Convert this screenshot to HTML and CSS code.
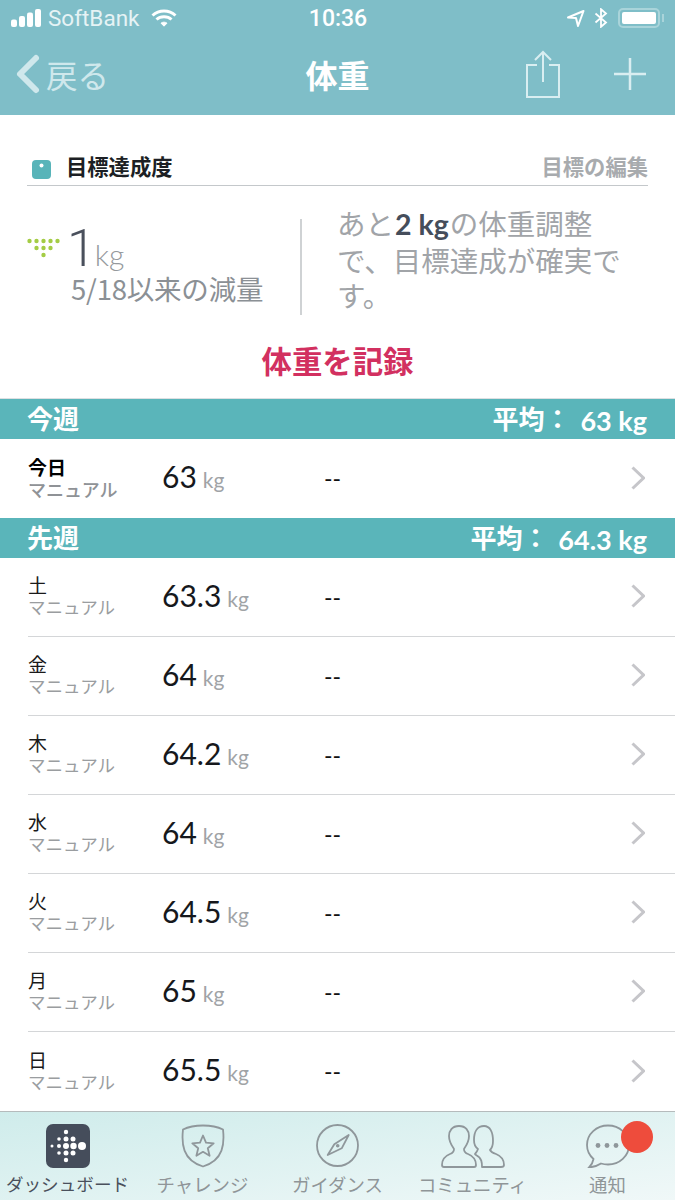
FILE: index.html
```html
<!DOCTYPE html>
<html lang="ja">
<head>
<meta charset="utf-8">
<title>体重</title>
<link rel="stylesheet" href="styles.css">
</head>
<body>
<div class="app">
  <header class="top">
    <div class="status">
      <div class="st-left">
        <svg class="signal" width="30" height="18" viewBox="0 0 30 18"><rect x="0" y="10.500" width="6" height="7.500" rx="2"/><rect x="8" y="7" width="6" height="11" rx="2"/><rect x="16" y="3.500" width="6" height="14.500" rx="2"/><rect x="24" y="0" width="6" height="18" rx="2"/></svg>
        <span class="carrier">SoftBank</span>
        <svg width="26" height="18" viewBox="0 0 26 18" fill="none" stroke="#fff"><path d="M1.500 6.500C8 .5 18 .5 24.500 6.500" stroke-width="3"/><path d="M5.500 10.500C9.500 6.800 16.500 6.800 20.500 10.500" stroke-width="3"/><path d="M10 14.200C11.800 12.800 14.200 12.800 16 14.200L13 17.200Z" fill="#fff" stroke-width="1"/></svg>
      </div>
      <div class="clock">10:36</div>
      <div class="st-right">
        <svg width="20" height="20" viewBox="0 0 20 20" fill="none" stroke="#fff" stroke-width="2"><path d="M2 9.500 17.500 3 12 18 10 10Z" stroke-linejoin="round"/></svg>
        <svg width="14" height="20" viewBox="0 0 14 20" fill="none" stroke="#fff" stroke-width="1.800"><path d="M1.500 5.500 12 14.500 7 18.800V1.200L12 5.500 1.500 14.500"/></svg>
        <div class="batt"><div class="batt-fill"></div></div>
        <div class="batt-tip"></div>
      </div>
    </div>
    <div class="nav">
      <div class="back">
        <svg width="26" height="42" viewBox="0 0 26 42" fill="none" stroke="#cfe8ec" stroke-width="6" stroke-linecap="round" stroke-linejoin="round"><path d="M21 5 5 21l16 16"/></svg>
        <span>戻る</span>
      </div>
      <h1 class="title">体重</h1>
      <div class="nav-actions">
        <svg width="34" height="48" viewBox="0 0 34 48" fill="none" stroke="#d9eef1" stroke-width="2"><path d="M11 15H1V47H33V15H23"/><path d="M17 32V2M9 10l8-8 8 8"/></svg>
        <svg width="32" height="32" viewBox="0 0 32 32" fill="none" stroke="#d9eef1" stroke-width="2.500"><path d="M16 0V32M0 16H32"/></svg>
      </div>
    </div>
  </header>

  <section class="goal">
    <div class="goal-head">
      <div class="goal-name">
        <svg class="scale" width="19" height="19" viewBox="0 0 19 19"><rect width="19" height="19" rx="4" fill="#58b4b9"/><circle cx="9.500" cy="5.500" r="2" fill="#fff"/></svg>
        <span>目標達成度</span>
      </div>
      <span class="goal-edit">目標の編集</span>
    </div>
    <div class="goal-body">
      <div class="loss">
        <svg class="loss-icon" width="35" height="22" viewBox="0 0 35 22" fill="#a4cc45"><circle cx="2.500" cy="3" r="2.200"/><circle cx="9.500" cy="3" r="2.200"/><circle cx="16.500" cy="3" r="2.200"/><circle cx="23.500" cy="3" r="2.200"/><circle cx="30.500" cy="3" r="2.200"/><circle cx="9.500" cy="10" r="2.200"/><circle cx="16.500" cy="10" r="2.200"/><circle cx="23.500" cy="10" r="2.200"/><circle cx="16.500" cy="17" r="2.200"/></svg>
        <div class="loss-text">
          <div class="loss-val"><span class="big">1</span><span class="unit">kg</span></div>
          <div class="loss-sub">5/18以来の減量</div>
        </div>
      </div>
      <div class="advice">あと<b>2 kg</b>の体重調整で、目標達成が確実です。</div>
    </div>
    <div class="record">体重を記録</div>
  </section>

  <div class="week"><span class="wk">今週</span><span class="avg">平均： <em>63 kg</em></span></div>
  <div class="row today">
    <div class="day"><b>今日</b><small>マニュアル</small></div>
    <div class="val">63<span>kg</span></div>
    <div class="dash">--</div>
    <svg class="chev" width="14" height="24" viewBox="0 0 14 24" fill="none" stroke="#c6c6ca" stroke-width="3"><path d="M1.500 1.500 12.500 12 1.500 22.500"/></svg>
  </div>

  <div class="week"><span class="wk">先週</span><span class="avg">平均： <em>64.3 kg</em></span></div>
  <div class="row">
    <div class="day"><b>土</b><small>マニュアル</small></div>
    <div class="val">63.3<span>kg</span></div>
    <div class="dash">--</div>
    <svg class="chev" width="14" height="24" viewBox="0 0 14 24" fill="none" stroke="#c6c6ca" stroke-width="3"><path d="M1.500 1.500 12.500 12 1.500 22.500"/></svg>
  </div>
  <div class="row">
    <div class="day"><b>金</b><small>マニュアル</small></div>
    <div class="val">64<span>kg</span></div>
    <div class="dash">--</div>
    <svg class="chev" width="14" height="24" viewBox="0 0 14 24" fill="none" stroke="#c6c6ca" stroke-width="3"><path d="M1.500 1.500 12.500 12 1.500 22.500"/></svg>
  </div>
  <div class="row">
    <div class="day"><b>木</b><small>マニュアル</small></div>
    <div class="val">64.2<span>kg</span></div>
    <div class="dash">--</div>
    <svg class="chev" width="14" height="24" viewBox="0 0 14 24" fill="none" stroke="#c6c6ca" stroke-width="3"><path d="M1.500 1.500 12.500 12 1.500 22.500"/></svg>
  </div>
  <div class="row">
    <div class="day"><b>水</b><small>マニュアル</small></div>
    <div class="val">64<span>kg</span></div>
    <div class="dash">--</div>
    <svg class="chev" width="14" height="24" viewBox="0 0 14 24" fill="none" stroke="#c6c6ca" stroke-width="3"><path d="M1.500 1.500 12.500 12 1.500 22.500"/></svg>
  </div>
  <div class="row">
    <div class="day"><b>火</b><small>マニュアル</small></div>
    <div class="val">64.5<span>kg</span></div>
    <div class="dash">--</div>
    <svg class="chev" width="14" height="24" viewBox="0 0 14 24" fill="none" stroke="#c6c6ca" stroke-width="3"><path d="M1.500 1.500 12.500 12 1.500 22.500"/></svg>
  </div>
  <div class="row">
    <div class="day"><b>月</b><small>マニュアル</small></div>
    <div class="val">65<span>kg</span></div>
    <div class="dash">--</div>
    <svg class="chev" width="14" height="24" viewBox="0 0 14 24" fill="none" stroke="#c6c6ca" stroke-width="3"><path d="M1.500 1.500 12.500 12 1.500 22.500"/></svg>
  </div>
  <div class="row last">
    <div class="day"><b>日</b><small>マニュアル</small></div>
    <div class="val">65.5<span>kg</span></div>
    <div class="dash">--</div>
    <svg class="chev" width="14" height="24" viewBox="0 0 14 24" fill="none" stroke="#c6c6ca" stroke-width="3"><path d="M1.500 1.500 12.500 12 1.500 22.500"/></svg>
  </div>

  <nav class="tabs">
    <div class="tab active">
      <svg width="44" height="44" viewBox="0 0 44 44"><rect width="44" height="44" rx="7" fill="#454d5b"/><g fill="#fff"><circle cx="20" cy="8" r="2.200"/><circle cx="20" cy="15" r="2.500"/><circle cx="27" cy="15" r="2.500"/><circle cx="6" cy="22" r="1.500"/><circle cx="13" cy="22" r="2"/><circle cx="20" cy="22" r="3"/><circle cx="27.500" cy="22" r="3.200"/><circle cx="36" cy="22" r="4"/><circle cx="13" cy="15" r="1.800"/><circle cx="13" cy="29" r="1.800"/><circle cx="20" cy="29" r="2.500"/><circle cx="27" cy="29" r="2.500"/><circle cx="20" cy="36" r="2.200"/></g></svg>
      <span>ダッシュボード</span>
    </div>
    <div class="tab">
      <svg width="44" height="44" viewBox="0 0 44 44" fill="none" stroke="#8f979b" stroke-width="1.800"><path d="M22 1.500C30 1.500 37 3 42 5.500 43.500 19 43 36 22 42.500 1 36 .5 19 2 5.500 7 3 14 1.500 22 1.500Z"/><path d="M22 11.500l3 7.200 7.700.6-5.900 5 1.800 7.500L22 27.800l-6.600 4 1.800-7.500-5.900-5 7.700-.6Z" stroke-linejoin="round"/></svg>
      <span>チャレンジ</span>
    </div>
    <div class="tab">
      <svg width="44" height="44" viewBox="0 0 44 44" fill="none" stroke="#8f979b" stroke-width="1.800"><circle cx="21.500" cy="21.500" r="20.500"/><path d="M32.700 11 18.300 20.300 11.700 31 25.700 24.300Z" stroke-linejoin="round"/><circle cx="21.700" cy="21.700" r="1.800" fill="#8f979b" stroke="none"/></svg>
      <span>ガイダンス</span>
    </div>
    <div class="tab">
      <svg width="64" height="44" viewBox="0 0 64 44" fill="none" stroke="#8f979b" stroke-width="1.800"><path d="M18 2C11 2 8 7 8 12c0 6 3 10 5 13 0 3-1 4-4 5-5 2-8 5-8 11 0 1 1 2 2 2h30c1 0 2-1 2-2 0-6-3-9-8-11-3-1-4-2-4-5 2-3 5-7 5-13C28 7 25 2 18 2Z"/><path d="M37 25c-1 3-2 4-3 5l1 1c6 3 6 8 6 12h19c2 0 3-1 3-2 0-5-3-9-8-11-3-1-5-2-6-4 2-2 3-5 3-9 0-9-3-15-9-15s-10 5-10 14c0 4 1 7 4 9Z" stroke-linejoin="round"/></svg>
      <span>コミュニティ</span>
    </div>
    <div class="tab">
      <svg width="44" height="44" viewBox="0 0 44 44" fill="none" stroke="#8f979b" stroke-width="1.800"><path d="M22 1.500C10.500 1.500 1 10 1 21c0 6 2.500 10.500 6.500 14-.5 3-2 6-4.500 8.500 5-.5 9-2 12-4 2 .6 4.500 1 7 1 11.500 0 21-8.500 21-19.500S33.500 1.500 22 1.500Z"/><g fill="#8f979b" stroke="none"><circle cx="12" cy="21.500" r="2.400"/><circle cx="21" cy="21.500" r="2.400"/><circle cx="30" cy="21.500" r="2.400"/></g></svg>
      <span>通知</span>
      <i class="badge"></i>
    </div>
  </nav>
</div>
</body>
</html>
```

FILE: styles.css
```css
* { box-sizing: border-box; }
html, body { margin: 0; padding: 0; }
body { font-family: "Lato", "Noto Sans CJK JP", sans-serif; background: #fff; }
.app { width: 675px; height: 1200px; overflow: hidden; position: relative; display: flex; flex-direction: column; }

.top { height: 115px; background: #7fbec8; color: #fff; flex: none; }
.status { height: 36px; display: flex; align-items: center; justify-content: space-between; padding: 0 11px; position: relative; }
.st-left { display: flex; align-items: center; gap: 7px; }
.signal { fill: #fff; }
.carrier { font: 400 22.500px "Roboto", sans-serif; color: #e6f3f5; margin-right: 5px; }
.clock { position: absolute; left: 1px; right: 0; text-align: center; font: 500 23px "Roboto", sans-serif; }
.st-right { display: flex; align-items: center; gap: 8px; }
.batt { width: 42px; height: 20px; border: 2px solid #a9d4da; border-radius: 5px; padding: 2px; margin-left: 2px; }
.batt-fill { height: 100%; background: #fff; border-radius: 2px; }
.batt-tip { width: 2px; height: 8px; background: #a9d4da; margin-left: -6px; }

.nav { height: 79px; position: relative; display: flex; align-items: center; justify-content: space-between; padding: 0 29px 4px 15px; }
.back { display: flex; align-items: center; gap: 5px; color: #cfe8ec; font: 400 31.500px "Noto Sans CJK JP", sans-serif; }
.title { position: absolute; left: 0; right: 0; margin: 0; text-align: center; font: 700 32px "Noto Sans CJK JP", sans-serif; color: #fff; }
.nav-actions { display: flex; align-items: center; gap: 54px; }

.goal { height: 284px; flex: none; padding-top: 37px; display: flex; flex-direction: column; border-bottom: 1px solid #dde0e2; }
.goal-head { margin: 0 27px; height: 34px; display: flex; align-items: center; justify-content: space-between; border-bottom: 1px solid #c4c8cb; }
.goal-name { display: flex; align-items: center; gap: 15px; padding-left: 5px; font: 700 21.300px/30px "Noto Sans CJK JP", sans-serif; color: #1c1f24; }
.goal-name span { margin-top: -5px; }
.scale { margin-top: 1px; }
.goal-edit { font: 700 21.300px/30px "Noto Sans CJK JP", sans-serif; color: #a8abae; margin-top: -5px; }
.goal-body { display: flex; margin-top: 33px; height: 96px; }
.loss { width: 275px; margin-left: 27px; border-right: 2px solid #cfd2d4; display: flex; align-items: flex-start; }
.loss-icon { margin-top: 19px; flex: none; }
.loss-text { margin-left: 9px; }
.loss-val { display: flex; align-items: baseline; height: 49px; }
.big { font: 300 52px/60px "Roboto", sans-serif; color: #4a505c; margin-left: -4px; }
.unit { font: 300 30px/40px "Lato", sans-serif; color: #95999d; margin-left: -1px; }
.loss-sub { font: 400 27.500px/34px "Noto Sans CJK JP", sans-serif; color: #8b9095; white-space: nowrap; margin-top: 3px; letter-spacing: -.2px; }
.advice { width: 300px; margin-left: 35px; font: 400 28.500px/35px "Noto Sans CJK JP", sans-serif; color: #a1a4a8; margin-top: -14px; }
.advice b { font-family: "Lato", sans-serif; font-weight: 700; color: #454d5b; margin: 0 1px; }
.record { text-align: center; font: 700 30.400px/44px "Noto Sans CJK JP", sans-serif; color: #d23060; margin-top: 23px; }

.week { height: 40px; flex: none; background: #5ab5ba; color: #fff; display: flex; justify-content: space-between; align-items: center; padding: 0 28px 0 27px; }
.wk { font: 700 26px/34px "Noto Sans CJK JP", sans-serif; margin-top: -2px; }
.avg { font: 700 26px/34px "Noto Sans CJK JP", sans-serif; margin-top: -1px; }
.avg em { font: 700 27px/34px "Lato", sans-serif; margin-left: 4px; position: relative; top: 2px; }

.row { height: 79px; flex: none; position: relative; display: flex; align-items: center; margin-left: 28px; padding-right: 30px; border-bottom: 1px solid #d4d6d8; }
.row.today, .row.last { border-bottom: 0; }
.day { width: 134px; display: flex; flex-direction: column; margin-top: -2px; }
.day b { font: 400 19px/22px "Noto Sans CJK JP", sans-serif; color: #1a1a1a; }
.day small { font: 400 17.500px/22px "Noto Sans CJK JP", sans-serif; color: #9a9da0; }
.today .day b { font-weight: 700; color: #000; }
.today .day small { font-size: 18px; font-weight: 500; color: #8f9296; }
.val { width: 162px; font: 400 30px/36px "Lato", sans-serif; color: #16181c; margin-top: -1px; }
.val span { font: 400 21px/36px "Lato", sans-serif; color: #a0a3a6; margin-left: 6px; }
.dash { flex: 1; font: 400 23px/36px "Lato", sans-serif; color: #111; margin-top: -1px; }
.chev { flex: none; margin-top: -2px; }

.tabs { position: absolute; left: 0; right: 0; bottom: 0; height: 89px; display: grid; grid-template-columns: repeat(5, 135px); padding-top: 12px; background: linear-gradient(172deg, #cfeceb 0%, #f0f8f8 100%); border-top: 1px solid #b5bbbc; }
.tab { display: flex; flex-direction: column; align-items: center; gap: 4px; position: relative; color: #8f9598; font: 400 18.400px/24px "Noto Sans CJK JP", sans-serif; white-space: nowrap; }
.tab.active { color: #4a505c; font-size: 17.600px; }
.badge { position: absolute; top: -3px; right: 22px; width: 32px; height: 32px; border-radius: 50%; background: #ee4c3c; }
```
